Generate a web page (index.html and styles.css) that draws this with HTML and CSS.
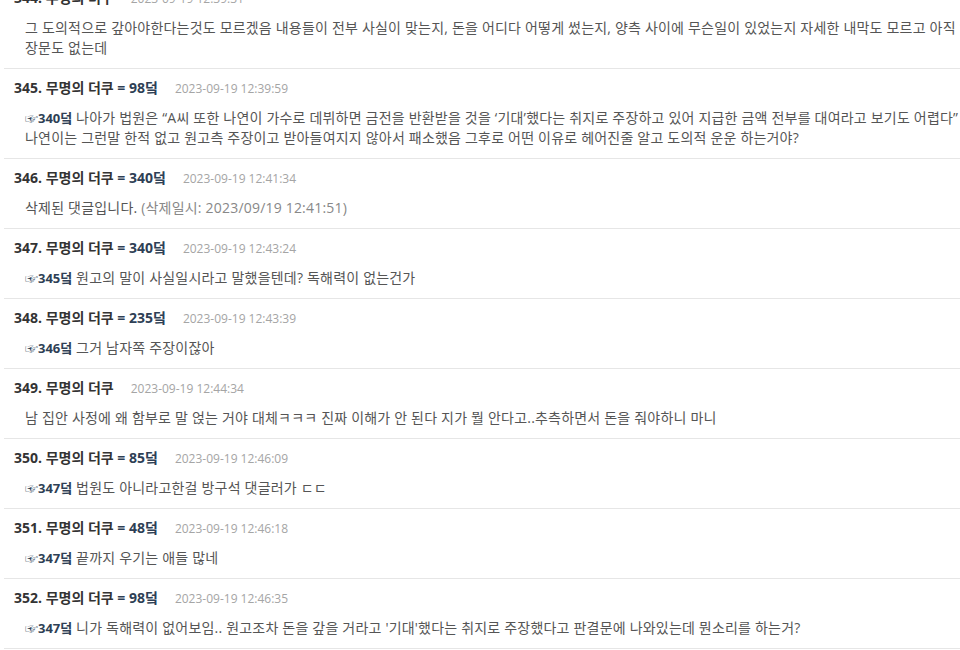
FILE: index.html
```html
<!DOCTYPE html>
<html lang="ko">
<head>
<meta charset="utf-8">
<title>댓글</title>
<link rel="stylesheet" href="styles.css">
</head>
<body>
<div class="comments">
  <div class="comment">
    <div class="head"><span class="name">344. 무명의 더쿠</span><span class="date">2023-09-19 12:39:31</span></div>
    <div class="text">그 도의적으로 갚아야한다는것도 모르겠음 내용들이 전부 사실이 맞는지, 돈을 어디다 어떻게 썼는지, 양측 사이에 무슨일이 있었는지 자세한 내막도 모르고 아직 입장문도 없는데</div>
  </div>
  <div class="comment">
    <div class="head"><span class="name">345. 무명의 더쿠 <span class="ref">= 98덬</span></span><span class="date">2023-09-19 12:39:59</span></div>
    <div class="text"><span class="reply">☞340덬</span> 나아가 법원은 “A씨 또한 나연이 가수로 데뷔하면 금전을 반환받을 것을 ‘기대’했다는 취지로 주장하고 있어 지급한 금액 전부를 대여라고 보기도 어렵다” 나연이는 그런말 한적 없고 원고측 주장이고 받아들여지지 않아서 패소했음 그후로 어떤 이유로 헤어진줄 알고 도의적 운운 하는거야?</div>
  </div>
  <div class="comment">
    <div class="head"><span class="name">346. 무명의 더쿠 <span class="ref">= 340덬</span></span><span class="date">2023-09-19 12:41:34</span></div>
    <div class="text">삭제된 댓글입니다. <span class="deleted">(삭제일시: 2023/09/19 12:41:51)</span></div>
  </div>
  <div class="comment">
    <div class="head"><span class="name">347. 무명의 더쿠 <span class="ref">= 340덬</span></span><span class="date">2023-09-19 12:43:24</span></div>
    <div class="text"><span class="reply">☞345덬</span> 원고의 말이 사실일시라고 말했을텐데? 독해력이 없는건가</div>
  </div>
  <div class="comment">
    <div class="head"><span class="name">348. 무명의 더쿠 <span class="ref">= 235덬</span></span><span class="date">2023-09-19 12:43:39</span></div>
    <div class="text"><span class="reply">☞346덬</span> 그거 남자쪽 주장이잖아</div>
  </div>
  <div class="comment">
    <div class="head"><span class="name">349. 무명의 더쿠</span><span class="date">2023-09-19 12:44:34</span></div>
    <div class="text">남 집안 사정에 왜 함부로 말 얹는 거야 대체ㅋㅋㅋ 진짜 이해가 안 된다 지가 뭘 안다고..추측하면서 돈을 줘야하니 마니</div>
  </div>
  <div class="comment">
    <div class="head"><span class="name">350. 무명의 더쿠 <span class="ref">= 85덬</span></span><span class="date">2023-09-19 12:46:09</span></div>
    <div class="text"><span class="reply">☞347덬</span> 법원도 아니라고한걸 방구석 댓글러가 ㄷㄷ</div>
  </div>
  <div class="comment">
    <div class="head"><span class="name">351. 무명의 더쿠 <span class="ref">= 48덬</span></span><span class="date">2023-09-19 12:46:18</span></div>
    <div class="text"><span class="reply">☞347덬</span> 끝까지 우기는 애들 많네</div>
  </div>
  <div class="comment">
    <div class="head"><span class="name">352. 무명의 더쿠 <span class="ref">= 98덬</span></span><span class="date">2023-09-19 12:46:35</span></div>
    <div class="text"><span class="reply">☞347덬</span> 니가 독해력이 없어보임.. 원고조차 돈을 갚을 거라고 '기대'했다는 취지로 주장했다고 판결문에 나와있는데 뭔소리를 하는거?</div>
  </div>
</div>
</body>
</html>
```

FILE: styles.css
```css
html, body {
  margin: 0;
  padding: 0;
  background: #fff;
  overflow: hidden;
}

body {
  font-family: "Open Sans", "Noto Sans CJK KR", sans-serif;
  font-size: 14px;
  color: #555;
}

.comments {
  margin: -21px 0 0 4px;
  width: 970px;
}

.comment {
  padding: 9px 0 10px 10px;
  border-bottom: 1px solid #e6e6e6;
}

.head {
  height: 20px;
  line-height: 20px;
  white-space: nowrap;
  overflow: hidden;
}

.name {
  font-weight: bold;
  color: #333;
}

.ref {
  color: #2e3f55;
}

.date {
  margin-left: 17px;
  font-size: 12px;
  color: #a5a5a5;
}

.text {
  margin-top: 10px;
  padding-left: 11px;
  line-height: 20px;
  letter-spacing: 0.2px;
  color: #555;
}

.reply {
  font-weight: bold;
  font-size: 13px;
  letter-spacing: 0;
  color: #2e3f55;
}

.deleted {
  color: #888;
}
```
